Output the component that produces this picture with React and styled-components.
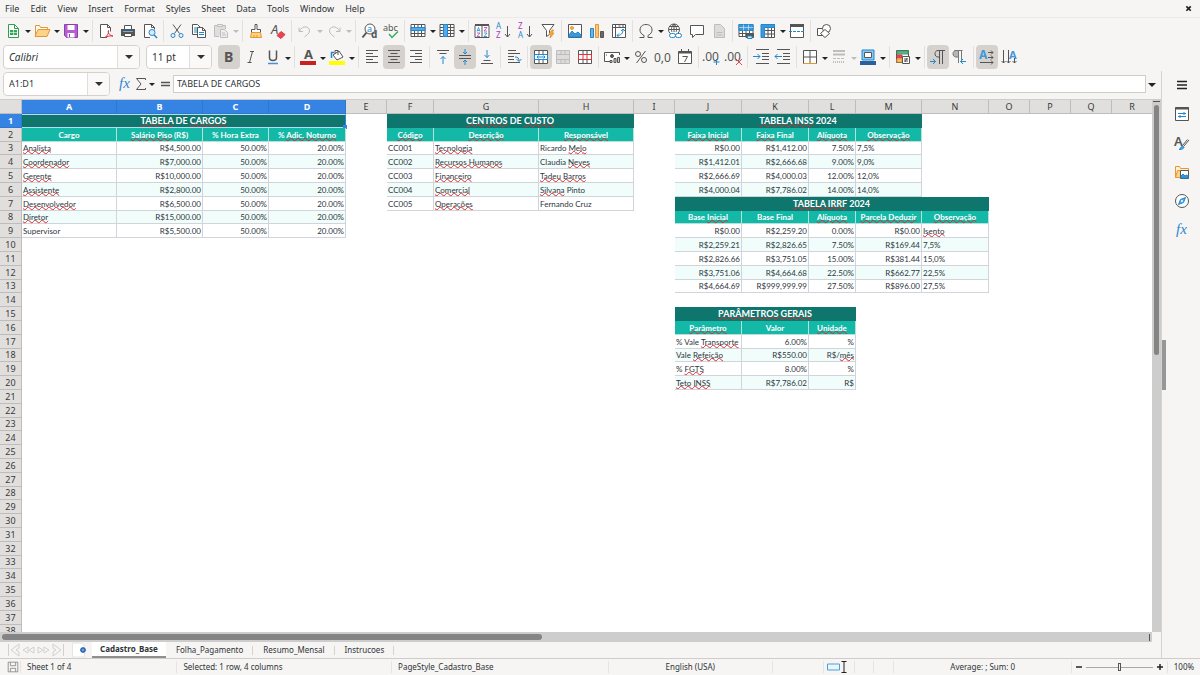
import React from "react";
import styled, { createGlobalStyle, css } from "styled-components";

const GlobalStyle = createGlobalStyle`
  * {
    box-sizing: border-box;
  }
  body {
    margin: 0;
    background: #f6f5f4;
    color: #2e3436;
    font-family: "Noto Sans", sans-serif;
    font-size: 9px;
    line-height: 12px;
    overflow: hidden;
  }
  button,
  input,
  select {
    margin: 0;
    padding: 0;
    border: 0;
    background: none;
    color: inherit;
    font: inherit;
  }
`;

const INK = "#555";
const BLUE = "#1e88d0";
const PALE = "#bdbdbd";

const Window = styled.div`
  display: flex;
  flex-direction: column;
  height: 100vh;
`;

/* ---------- menu bar ---------- */

const MenuBar = styled.nav`
  display: flex;
  align-items: center;
  height: 17px;
  padding: 0 4px 0 5px;
`;

const MenuItem = styled.button`
  margin-right: 11px;
`;

const CloseButton = styled.button`
  display: flex;
  margin-left: auto;
`;

/* ---------- toolbars ---------- */

const Toolbar = styled.div`
  display: flex;
  align-items: center;
  flex: none;
  height: ${(p) => (p.$tall ? 28 : 26)}px;
  padding-left: ${(p) => (p.$tall ? 3 : 2)}px;
  ${(p) => p.$ruled && "border-top: 1px solid #ebeae8;"}
`;

const ToolButton = styled.button`
  display: flex;
  align-items: center;
  justify-content: center;
  flex: none;
  width: ${(p) => p.$width || 22}px;
  height: 24px;
  border-radius: 4px;
  background: ${(p) => (p.$on ? "#d5d1cd" : "transparent")};
`;

const ArrowButton = styled.button`
  display: flex;
  align-items: center;
  justify-content: center;
  flex: none;
  width: ${(p) => p.$width || 7}px;
  height: 20px;
  padding-top: 2px;
  color: ${(p) => (p.disabled ? PALE : "#222")};
`;

const Separator = styled.span`
  flex: none;
  width: 1px;
  height: 22px;
  margin: 0 2px 0 ${(p) => (p.$wide ? 3 : 2)}px;
  background: #e3e1df;
`;

const Glyph = styled.svg`
  display: block;
  overflow: visible;
  fill: none;
  stroke: ${(p) => (p.$off ? PALE : INK)};
  text {
    stroke: none;
    font-family: "Noto Sans", sans-serif;
  }
`;

const Combo = styled.div`
  display: grid;
  grid-template-columns: 1fr 22px;
  flex: none;
  width: ${(p) => p.$width}px;
  height: 24px;
  margin-right: 6px;
  border: 1px solid #d5d1cd;
  border-radius: 4px;
  background: #fff;
  overflow: hidden;
`;

const comboText = css`
  min-width: 0;
  height: 22px;
  padding-left: 5px;
  font-size: 10px;
  font-style: ${(p) => (p.$italic ? "italic" : "normal")};
  outline: 0;
`;

const ComboSelect = styled.select`
  ${comboText}
  grid-area: 1 / 1 / 2 / 3;
  appearance: none;
`;

const ComboInput = styled.input`
  ${comboText}
  font-size: 9px;
`;

const ComboArrow = styled.span`
  display: flex;
  grid-area: 1 / 2;
  align-items: center;
  justify-content: center;
  border-left: 1px solid #e0dedb;
  background: #faf9f8;
  pointer-events: none;
`;

/* ---------- workspace ---------- */

const Workspace = styled.div`
  display: flex;
  flex: 1;
  min-height: 0;
`;

const Main = styled.main`
  display: flex;
  flex-direction: column;
  flex: 1;
  min-width: 0;
`;

const FormulaBar = styled.div`
  display: flex;
  align-items: center;
  flex: none;
  height: 29px;
  padding: 0 3px 3px;
  border-bottom: 1px solid #cfcdca;
`;

const FormulaInput = styled.input`
  flex: 1;
  min-width: 0;
  height: 18px;
  padding-left: 3px;
  border: 1px solid #cfcdca;
  background: #fff;
`;

const SheetRow = styled.div`
  display: flex;
  flex: 1;
  min-height: 0;
`;

const SheetView = styled.div`
  flex: 1;
  min-width: 0;
  background: #fff;
  overflow: hidden;
`;

const VerticalScroll = styled.div`
  display: flex;
  flex-direction: column;
  align-items: center;
  gap: 3px;
  width: 9px;
  padding-top: 1px;
  background: #cdcdcd;
`;

const HorizontalScroll = styled.div`
  display: flex;
  align-items: center;
  justify-content: space-between;
  flex: none;
  height: 10px;
  margin-right: 9px;
  padding: 0 2px;
  background: #cdcdcd;
`;

const Thumb = styled.div`
  border-radius: 3px;
  background: #848484;
  ${(p) => (p.$vertical ? "width: 5px; height: 47%;" : "width: 47%; height: 6px;")}
`;

const SplitMark = styled.span`
  background: #555;
  ${(p) => (p.$vertical ? "width: 7px; height: 1px;" : "width: 1px; height: 7px;")}
`;

/* ---------- sheet ---------- */

const Grid = styled.table`
  width: 0;
  table-layout: fixed;
  border-collapse: separate;
  border-spacing: 0;
  line-height: 12px;
  tr {
    height: 14px;
  }
  tbody tr:nth-child(5n + 3) {
    height: 13px;
  }
`;

const HeadCell = styled.th`
  padding: 0;
  border-right: 1px solid #bfbdbb;
  border-bottom: 1px solid #bfbdbb;
  background: ${(p) => (p.$on ? "#3584e4" : "#e1dfdd")};
  color: ${(p) => (p.$on ? "#fff" : "#3a3a3a")};
  font-weight: ${(p) => (p.$on ? 700 : 400)};
  ${(p) => p.$on && "border-color: #2f77cf;"}
`;

const fills = {
  title: css`
    background: #0f766e;
    border-color: #0f766e;
    color: #fff;
    font-weight: 700;
    text-align: center;
  `,
  head: css`
    background: #14b8a6;
    border-color: #b9dfda;
    color: #fff;
    font-weight: 700;
    text-align: center;
  `,
  even: css`
    background: #f0fdfa;
    border-color: #d1d5db;
  `,
  odd: css`
    border-color: #d1d5db;
  `,
};

const Cell = styled.td`
  position: relative;
  padding: 0 1px;
  border: 0 solid transparent;
  border-width: 0 1px 1px 0;
  color: #2f3640;
  font-family: Lato, sans-serif;
  font-size: ${(p) => (p.$kind === "title" ? 9 : 8)}px;
  line-height: 12px;
  text-align: ${(p) => (p.$right ? "right" : "left")};
  white-space: nowrap;
  ${(p) => fills[p.$kind]}
`;

const Misspelt = styled.span`
  text-decoration: underline wavy #e0262b 1px;
  text-decoration-skip-ink: none;
  text-underline-offset: -1px;
`;

const Selection = styled.span`
  position: absolute;
  inset: 0 -1px -1px 0;
  border: 1px solid #b5dcef;
  border-width: 1px 1px 1px 0;
  border-right-color: #3584e4;
  &::after {
    content: "";
    position: absolute;
    right: -2px;
    bottom: -2px;
    width: 4px;
    height: 4px;
    background: #3584e4;
  }
`;

/* ---------- sheet tabs ---------- */

const TabBar = styled.div`
  display: flex;
  align-items: stretch;
  flex: none;
  height: 16px;
  padding-left: 6px;
  font-size: 8px;
`;

const TabTool = styled.button`
  display: flex;
  align-items: center;
  justify-content: center;
  width: ${(p) => p.$width}px;
`;

const TabGap = styled.span`
  width: 10px;
`;

const Tab = styled.button`
  display: flex;
  align-items: center;
  padding: 0 ${(p) => (p.$on ? 8 : 10)}px;
  ${(p) =>
    p.$on
      ? css`
          background: #fff;
          border-bottom: 2px solid #8f8f8f;
          font-weight: 700;
        `
      : css`
          background: linear-gradient(#d5d3d0, #d5d3d0) right center / 1px 9px no-repeat;
        `}
`;

/* ---------- sidebar ---------- */

const Sidebar = styled.aside`
  display: flex;
  flex: none;
  width: 39px;
  border-left: 1px solid #d5d3d0;
`;

const SidebarHandle = styled.button`
  align-self: center;
  width: 4px;
  height: 50px;
  background: #979797;
`;

const SidebarDeck = styled.div`
  display: flex;
  flex-direction: column;
  align-items: center;
  flex: 1;
  gap: 5px;
  padding: 2px 2px 0 0;
`;

/* ---------- status bar ---------- */

const StatusBar = styled.footer`
  display: flex;
  align-items: center;
  flex: none;
  height: 17px;
  border-top: 1px solid #cfcdca;
  font-size: 8px;
`;

const StatusField = styled.div`
  display: flex;
  align-items: center;
  justify-content: ${(p) => (p.$center ? "center" : "flex-start")};
  flex: ${(p) => (p.$fixed ? "none" : `${p.$width} 1 0`)};
  width: ${(p) => p.$width}px;
  height: 12px;
  padding-left: ${(p) => (p.$center ? 0 : 6)}px;
  border-right: 1px solid #e6e4e2;
  white-space: nowrap;
  &:last-child {
    border-right: 0;
  }
`;

const ZoomSlider = styled.input`
  width: 67px;
  height: 12px;
  margin: 0 1px;
  appearance: none;
  background: linear-gradient(#a9a7a4, #a9a7a4) center / 100% 1px no-repeat;
  &::-webkit-slider-thumb {
    appearance: none;
    width: 3px;
    height: 8px;
    border: 1px solid #555;
    background: #f6f5f4;
  }
`;

const ZoomButton = styled.button`
  display: flex;
`;

/* ---------- icons ---------- */

const gridLines = "M1 1.5h14v12H1zM1 4.5h14M1 7.5h14M1 10.5h14M4.5 1.5v12M8 1.5v12M11.5 1.5v12";

const icons = {
  new: (
    <>
      <path d="M3.5 1.5h6l4 4v9h-10z" fill="#fff" stroke="#2f9e4f" />
      <path d="M9.5 1.5v4h4" stroke="#2f9e4f" />
      <path d="M5 7h7v5H5z" fill="#36a853" stroke="none" />
      <path d="M5 9.500h7M8.500 7v5" stroke="#fff" strokeWidth=".6" />
    </>
  ),
  open: (
    <>
      <path d="M1.5 13V2.5h4l1 2h7v3" fill="#fff" stroke="#e8962e" />
      <path d="M1 13.5L4 6.5h12l-3 7z" fill="#fbd38b" stroke="#e8962e" />
    </>
  ),
  save: (
    <>
      <path d="M1.5 1.5h13v13H3.5l-2-2z" fill="#b45fd0" stroke="#8e3fae" />
      <path d="M4.5 2h7v5h-7z" fill="#fff" stroke="none" />
      <path d="M4.5 10h7v4.5h-7z" fill="#fff" stroke="none" />
      <path d="M6.5 11v3" stroke="#8e3fae" />
    </>
  ),
  pdf: (
    <>
      <path d="M9 14.500H2.500v-13h7l3 3v4" fill="#fff" />
      <path d="M9.500 1.500v3h3" />
      <path d="M7 14.500c3-2 4-5 3.500-7-1 2 1 5 4.500 5.500-3-.5-6 .5-8 1.500z" stroke="#d9363e" />
    </>
  ),
  print: (
    <>
      <path d="M1 6h14v7H1z" fill="#555" stroke="none" />
      <path d="M4.500 6V2.500h7V6M4.500 10.500h7v3h-7z" fill="#fff" />
      <path d="M3 8.500h10" stroke="#5fb0e8" />
    </>
  ),
  preview: (
    <>
      <path d="M8 14.500H2.500v-13h7l3 3v2" fill="#fff" />
      <path d="M9.500 1.500v3h3" />
      <circle cx="10" cy="9.500" r="3" fill="#d7ecfa" stroke={BLUE} />
      <path d="M12.200 12l2.800 3" stroke={BLUE} strokeWidth="1.500" />
    </>
  ),
  cut: (
    <>
      <path d="M4 1.500l6.500 9M12 1.500l-6.500 9" />
      <circle cx="4" cy="12.500" r="2" stroke={BLUE} />
      <circle cx="12" cy="12.500" r="2" stroke={BLUE} />
    </>
  ),
  copy: (
    <>
      <path d="M1.500 1.500h5l3 3v7h-8z" fill="#fff" />
      <path d="M3 5h4M3 7h4M3 9h4" stroke={BLUE} />
      <path d="M6.500 4.500h5l3 3v7h-8z" fill="#fff" />
      <path d="M11.500 4.500v3h3" />
      <path d="M8 9.500h5M8 11.500h5" stroke={BLUE} />
    </>
  ),
  paste: (
    <>
      <path d="M6 13.500H1.500v-11h11V6" fill="#dedede" />
      <path d="M4.500 1.500h5v2h-5z" fill="#eee" />
      <path d="M7.500 6.500h4l3 3v5h-7z" fill="#eee" />
      <path d="M9 10h3M9 12h4" />
    </>
  ),
  brush: (
    <>
      <path d="M7 1.500h2v5h3.500v3h-9v-3H7z" fill="#fff" />
      <path d="M3.500 9.500h9l1 5h-11z" fill="#fbd38b" stroke="#e8962e" />
      <path d="M6 12v2M9 12v2" stroke="#e8962e" />
    </>
  ),
  clear: (
    <>
      <text x="1" y="11" fontSize="13" fontStyle="italic" fill={INK}>A</text>
      <path d="M7 12.500l4-4 4 3-4 4z" fill="#e8474f" stroke="#d9363e" />
    </>
  ),
  undo: <path d="M2 4.500v4h4M2.500 8c3-6 10-5 10 0 0 3-3 4-5 6" />,
  redo: <path d="M14 4.500v4h-4M13.500 8c-3-6-10-5-10 0 0 3 3 4 5 6" />,
  find: (
    <>
      <circle cx="9" cy="6" r="5" fill="#fff" />
      <path d="M5.500 9.500l-4 5" strokeWidth="2" />
      <text x="6" y="9" fontSize="9" fill={BLUE}>a</text>
      <text x="10" y="15" fontSize="10" fontWeight="700" fill={INK}>d</text>
    </>
  ),
  spell: (
    <>
      <text x="0" y="8" fontSize="9" fill={INK}>abc</text>
      <path d="M6 11l3 3.500 6-6" stroke="#36b05a" strokeWidth="1.500" />
    </>
  ),
  rows: (
    <>
      <path d={gridLines} fill="#fff" />
      <path d="M1 4.500h14v3H1z" fill="#53aae8" stroke={BLUE} />
    </>
  ),
  cols: (
    <>
      <path d={gridLines} fill="#fff" />
      <path d="M4.500 1.500h4v12h-4z" fill="#53aae8" stroke={BLUE} />
    </>
  ),
  sort: (
    <>
      <path d="M1 2.500h14v12H1zM8 2.500v12" fill="#fff" />
      <path d="M1 2h14" strokeWidth="2" />
      <path d="M3 8.500l1.500-4 1.500 4M3.500 7.500h2M10 10h3l-3 3.500h3" stroke={BLUE} strokeWidth=".8" />
      <path d="M3 10h3l-3 3.500h3M10 4.500h3L10 8h3" stroke="#a640b5" strokeWidth=".8" />
    </>
  ),
  asc: (
    <>
      <text x="0" y="6" fontSize="8" fill={BLUE}>A</text>
      <text x="0" y="15" fontSize="8" fill="#a640b5">Z</text>
      <path d="M11.500 3v11M9 11l2.500 3 2.500-3" />
    </>
  ),
  desc: (
    <>
      <text x="0" y="6" fontSize="8" fill="#a640b5">Z</text>
      <text x="0" y="15" fontSize="8" fill={BLUE}>A</text>
      <path d="M11.500 3v11M9 11l2.500 3 2.500-3" />
    </>
  ),
  filter: (
    <>
      <path d="M2 1.500h12L9.500 7.500v4l-3 2v-6z" fill="#fff" />
      <path d="M12 7l-3 4h2l-1 4 4-5h-2l1.500-3z" fill="#f7a941" stroke="#e8962e" />
    </>
  ),
  image: (
    <>
      <path d="M1.500 1.500h13v13h-13z" fill="#fff" />
      <path d="M2 14v-2l3-4 3 3 3-2 3 3v2z" fill="#3d97dc" stroke={BLUE} />
      <circle cx="5" cy="5" r="1.500" fill="#f7b85a" stroke="#e8962e" />
    </>
  ),
  chart: (
    <>
      <path d="M1.500 5.500h3v9h-3z" fill="#6bb5ec" stroke={BLUE} />
      <path d="M6.500 1.500h3v13h-3z" fill="#fbc774" stroke="#e8962e" />
      <path d="M11.500 8.500h3v6h-3z" fill="#6a6a6a" />
    </>
  ),
  pivot: (
    <>
      <path d="M1.500 1.500h13v13h-13zM1.500 4.500h13M4.500 1.500v13M7.500 3h2M11 3h2" fill="#fff" />
      <path d="M6 12.500c4 0 6-2 6-6M10 8l2-2 2 2M8 10.500l-2 2 2 2" stroke={BLUE} />
    </>
  ),
  omega: <path d="M1.500 14.500H6v-2C3 11 2 9 2 7c0-3 2-5.500 6-5.500S14 4 14 7c0 2-1 4-4 5.500v2h4.500" />,
  link: (
    <>
      <circle cx="7" cy="6.500" r="5.500" fill="#fff" />
      <path d="M1.500 6.500h11M2.500 3.500h9M7 1v8M7 1c-3 3-3 6-2 8M7 1c3 3 3 6 2 8" />
      <rect x="2.500" y="10.500" width="6" height="4" rx="2" fill="#fff" stroke={BLUE} />
      <rect x="8.500" y="10.500" width="6" height="4" rx="2" fill="#fff" stroke={BLUE} />
    </>
  ),
  comment: <path d="M1.500 2.500h13v9H6.500l-3 3v-3h-2z" fill="#fff" />,
  headerFooter: (
    <>
      <path d="M3.500 1.500h6l4 4v9h-10z" fill="#dcdcdc" />
      <path d="M5.500 9.500h6M5.500 12h6" />
    </>
  ),
  printArea: (
    <>
      <path d={gridLines} fill="#fff" />
      <path d="M1 1.500h14v6H1z" fill="#3d97dc" stroke={BLUE} />
      <path d="M5.500 1.500v6M10.500 1.500v6M1 4.500h14" stroke="#fff" strokeWidth=".5" />
      <path d="M8 10.500h7.500v4H8z" fill="#555" />
      <path d="M9.500 13h4.500v2.500H9.500z" fill="#cfe8fa" stroke={BLUE} />
    </>
  ),
  freeze: (
    <>
      <path d="M1.500 1.500h13v13h-13zM4.500 7.500h10M4.500 11h10M8 4.500v10M11.500 4.500v10" fill="#fff" />
      <path d="M1 1.500h13.500v3h-10v10H1z" fill="#3d97dc" stroke={BLUE} />
    </>
  ),
  split: (
    <>
      <path d="M1.500 1.500h13v13h-13z" fill="#fff" />
      <path d="M1 2.500h14" strokeWidth="3" />
      <path d="M0 8.500h16" stroke={BLUE} strokeDasharray="3 1" />
    </>
  ),
  shapes: (
    <>
      <path d="M1.500 5.500h7v7h-7z" fill="#fff" />
      <circle cx="10.500" cy="5.500" r="4" fill="#fff" />
      <path d="M9 6.500l4.500 4-4.500 4-4.500-4z" fill="#fff" />
    </>
  ),
  bold: <text x="3" y="13" fontSize="14" fontWeight="700" fill={INK}>B</text>,
  italic: <path d="M7 2.500h4M4.500 13.500h4M9.500 2.500l-3 11" />,
  underline: (
    <>
      <path d="M4.500 1.500v7c0 4 7 4 7 0v-7" strokeWidth="1.500" />
      <path d="M3 14.500h10" stroke="#4a90d9" strokeWidth="1.500" />
    </>
  ),
  fontColor: (
    <>
      <text x="4" y="10" fontSize="13" fontWeight="700" fill={INK}>A</text>
      <path d="M0 14h16" stroke="#c9211e" strokeWidth="4" />
    </>
  ),
  fillColor: (
    <>
      <path d="M4 6l6-4 4 6-6 3z" fill="#fff" />
      <path d="M6 5V1.500h3V6" />
      <path d="M2.500 9V3.500H5" stroke={BLUE} strokeWidth="1.500" />
      <path d="M0 14h16" stroke="#ff0" strokeWidth="4" />
    </>
  ),
  left: <path d="M2 1.500h12M2 4.500h7M2 7.500h12M2 10.500h7M2 13.500h12" />,
  center: <path d="M2 1.500h12M4.500 4.500h7M2 7.500h12M4.500 10.500h7M2 13.500h12" />,
  right: <path d="M2 1.500h12M7 4.500h7M2 7.500h12M7 10.500h7M2 13.500h12" />,
  top: (
    <>
      <path d="M2 1.500h12M4.500 4.500h7" />
      <path d="M8 15V7.500M5.500 10L8 7.500l2.500 2.500" stroke={BLUE} />
    </>
  ),
  middle: (
    <>
      <path d="M2 6.500h12M2 9.500h12" />
      <path d="M8 0v5M6 3l2 2 2-2M8 16v-5M6 13l2-2 2 2" stroke={BLUE} />
    </>
  ),
  bottom: (
    <>
      <path d="M4.500 11.500h7M2 14.500h12" />
      <path d="M8 1v7.500M5.500 6L8 8.500 10.500 6" stroke={BLUE} />
    </>
  ),
  wrap: (
    <>
      <path d="M2 1.500h8M2 4.500h12M2 7.500h6M2 10.500h6M2 13.500h12" />
      <path d="M9 8c3 0 4 1 4 4M10.500 10l2.500 2.500L15.500 10" stroke={BLUE} />
    </>
  ),
  merge: (
    <>
      <path d="M1.500 1.500h13v13h-13zM1.500 5.500h13M1.500 10.500h13M6 1.500v4M10 1.500v4M6 10.500v4M10 10.500v4" fill="#fff" />
      <path d="M1.500 5.500h13v5h-13zM4 8h8M5.500 6.500L4 8l1.500 1.500M10.500 6.500L12 8l-1.500 1.500" stroke={BLUE} />
    </>
  ),
  mergeOff: (
    <path d="M1.500 1.500h13v13h-13zM1.500 5.500h13M1.500 10.500h13M6 1.500v4M10 1.500v4M6 10.500v4M10 10.500v4" fill="#dcdcdc" />
  ),
  unmerge: (
    <>
      <path d="M1.500 1.500h13v13h-13zM6 1.500v4M10 1.500v4M6 10.500v4M10 10.500v4" fill="#fff" />
      <path d="M1.500 5.500h13v5h-13zM6 5.500v5M10 5.500v5" stroke="#d9363e" />
    </>
  ),
  currency: (
    <>
      <path d="M6 12.500H.5v-9h15V6" fill="#fff" />
      <circle cx="8" cy="7" r="1.500" fill={INK} />
      <path d="M6 11.500h2v2H6zM10 9.500h2v4h-2zM13.500 8.500h2v5h-2z" fill="#ccc" />
      <path d="M2.500 5.500v1" />
    </>
  ),
  percent: (
    <>
      <circle cx="5" cy="5" r="2.500" />
      <circle cx="11" cy="11" r="2.500" />
      <path d="M12.500 2l-9 12" />
    </>
  ),
  number: <text x="-1" y="13" fontSize="12" fill={INK}>0,0</text>,
  date: (
    <>
      <path d="M1.500 2.500h13v12h-13z" fill="#fff" />
      <path d="M1.500 3.500h13" strokeWidth="2" />
      <path d="M4.500 0v4M11.500 0v4M5.500 7.500h5L7.500 13" />
    </>
  ),
  addDecimal: (
    <>
      <text x="-2" y="12" fontSize="12" fill={INK}>.00</text>
      <path d="M12.500 10v6M9.500 13h6" stroke={BLUE} />
    </>
  ),
  delDecimal: (
    <>
      <text x="-2" y="12" fontSize="12" fill={INK}>.00</text>
      <path d="M10 10l6 6M16 10l-6 6" stroke="#e0454c" />
    </>
  ),
  indent: (
    <>
      <path d="M3 .5h13M9 4.500h7M9 7.500h7M9 10.500h7M3 14.500h13" />
      <path d="M0 7.500h7M4.500 5L7 7.500 4.500 10" stroke={BLUE} />
    </>
  ),
  outdent: (
    <>
      <path d="M2 .5h13M8 4.500h7M8 7.500h7M8 10.500h7M2 14.500h13" />
      <path d="M0 7.500h7M2.500 5L0 7.500 2.500 10" stroke={BLUE} />
    </>
  ),
  borders: (
    <>
      <path d="M1.500 1.500h13v13h-13z" fill="#fff" />
      <path d="M8 1.500v13M1.500 8h13" />
      <path d="M1.500 14.500h13" stroke="#e8962e" />
    </>
  ),
  lineStyle: (
    <>
      <path d="M2 2h12M2 5.500h12" strokeWidth="2" />
      <path d="M2 9.500h12" strokeDasharray="3 1" />
      <path d="M2 13h12" strokeDasharray="1 1" strokeWidth="2" />
    </>
  ),
  lineColor: (
    <>
      <path d="M2 1h12v10H2z" fill="#8fc6ee" stroke={BLUE} />
      <path d="M4.500 3.500h7v5h-7z" fill="#fff" />
      <path d="M0 14h16" stroke="#2a6099" strokeWidth="4" />
    </>
  ),
  conditional: (
    <>
      <path d="M1.500 1.500h12v12h-12z" fill="#fff" />
      <path d="M2 2h11v3H2z" fill="#57b98a" stroke="#3a9b6c" />
      <path d="M2 6h5v3H2z" fill="#e8474f" stroke="#d9363e" />
      <path d="M2 10h5v3H2z" fill="#fbc774" stroke="#e8962e" />
      <path d="M7.500 7.500h7v7h-7zM9 10h4M9 12h4M12 9l-2 4" fill="#fff" />
    </>
  ),
  ltr: (
    <>
      <path d="M9.500 15V1.500M12.500 15V1.500M15 1.500H8C4 1.500 4 8 8 8h1.500" />
      <path d="M0 12.500h5.500M3 10l2.500 2.500L3 15" stroke={BLUE} />
    </>
  ),
  rtl: (
    <>
      <path d="M6.500 1.500H4c-4 0-4 6.500 0 6.500h2.500z" fill="#b5b5b5" stroke="#777" />
      <path d="M6.500 14V1.500M9.500 11V1.500M2.500 1.500h8" stroke="#777" />
      <path d="M14 12.500H8.500M11 10l-2.500 2.500L11 15" stroke={BLUE} />
    </>
  ),
  textLtr: (
    <>
      <text x="0" y="10" fontSize="12" fontWeight="700" fill="#3d97dc">A</text>
      <path d="M9 3.500h5M9 8.500h5M1 13.500h13M12 1.500l2 2-2 2M12 6.500l2 2-2 2M12 11.500l2 2-2 2" />
    </>
  ),
  textTtb: (
    <>
      <text x="8" y="10" fontSize="11" fontWeight="700" fill="#3d97dc">A</text>
      <path d="M2.500 1v13M7.500 1v13M13.500 9v5M.5 12l2 2 2-2M5.500 12l2 2 2-2M11.500 12l2 2 2-2" />
    </>
  ),
  fx: (
    <text x="2" y="12" fontSize="15" fontStyle="italic" fill="#2e86d2" style={{ fontFamily: "Liberation Serif" }}>
      fx
    </text>
  ),
  sum: <path d="M12.500 4V2.500h-9L8 8l-4.500 5.500h9V12" />,
  equals: <path d="M4 6.500h9M4 9.500h9" strokeWidth="1.500" />,
  menu: <path d="M3 4.500h10M3 8h10M3 11.500h10" strokeWidth="1.500" stroke="#222" />,
  properties: (
    <>
      <path d="M1.500 1.500h13v13h-13z" fill="#fff" />
      <path d="M1 2.500h14" strokeWidth="2" />
      <path d="M4 7.500h8M4 10.500h8M10 6v3M6 9v3" stroke={BLUE} />
    </>
  ),
  styles: (
    <>
      <text x="0" y="11" fontSize="13" fontWeight="600" fill={INK}>A</text>
      <path d="M15 5l-5 6M13.500 4.500l-5 6" />
      <path d="M5 14.500c2 0 1-3 4-3.500 2 1 1 3.500-4 3.500z" fill="#53aae8" stroke={BLUE} />
    </>
  ),
  gallery: (
    <>
      <path d="M1.500 13.500v-11h4l1 2h8v3" fill="#fff3de" stroke="#e8962e" />
      <path d="M1.500 13.500l2-7h4v7z" fill="#fbd38b" stroke="#e8962e" />
      <path d="M6.500 6.500h8v8h-8z" fill="#fff" />
      <path d="M7 14v-2l2-2 2 2 1.500-1L14 12v2z" fill="#3d97dc" stroke={BLUE} />
    </>
  ),
  navigator: (
    <>
      <circle cx="8" cy="8" r="6.500" fill="#fff" />
      <path d="M11.500 4.500l-2 5-5 2 2-5z" fill="#53aae8" stroke={BLUE} />
      <circle cx="8" cy="8" r="1" fill="#fff" stroke="none" />
    </>
  ),
  saveSmall: <path d="M2.500 2.500h11v11h-11zM5 2.500v4h6v-4M5 13.500v-4h6v4" stroke="#8a8a8a" />,
  addSheet: (
    <>
      <path d="M-3.500 1h9l3 3v11h-12z" fill="#fff" stroke="#e4e4e4" />
      <circle cx="7" cy="8" r="2" fill="#fff" stroke="#2a68b8" strokeWidth="1.500" />
      <path d="M7 5v6M4 8h6" stroke="#2a68b8" strokeWidth=".8" />
    </>
  ),
  first: <path d="M3.500 2v12M14 2L6 8l8 6V10L11 8l3-2z" stroke="#d2d0ce" />,
  prev: <path d="M8 5L3 8l5 3zM14 5L9 8l5 3z" stroke="#d2d0ce" />,
  next: <path d="M2 5l5 3-5 3zM8 5l5 3-5 3z" stroke="#d2d0ce" />,
  last: <path d="M12.500 2v12M2 2l8 6-8 6V10l3-2-3-2z" stroke="#d2d0ce" />,
  selectMode: (
    <>
      <path d="M-3.500 5h12v6h-12z" stroke="#4a9fdd" fill="#eaf5fd" />
      <path d="M10.500 2.500h5M10.500 13.500h5M13 2.500v11" stroke="#222" />
    </>
  ),
  minus: <path d="M4 8h8" stroke="#222" strokeWidth="2" />,
  plus: <path d="M4 8h8M8 4v8" stroke="#222" strokeWidth="2" />,
  close: <path d="M5 5l5 5M10 5l-5 5" stroke="#222" strokeWidth="2" />,
};

const Icon = ({ name, size = 16, off }) => (
  <Glyph width={size} height={size} viewBox="0 0 16 16" $off={off} aria-hidden="true">
    {icons[name]}
  </Glyph>
);

const Caret = ({ big }) => (
  <svg width={big ? 8 : 6} height={big ? 4 : 3} viewBox="0 0 8 4" aria-hidden="true">
    <path d="M0 0h8L4 4z" fill="currentColor" />
  </svg>
);

/* [icon, label, flags]: a = has arrow, x = disabled, o = pressed; "|" separates groups */
const standardTools = [
  ["new", "New", "a"], ["open", "Open", "a"], ["save", "Save", "a"], "|",
  ["pdf", "Export as PDF"], ["print", "Print"], ["preview", "Print preview"], "|",
  ["cut", "Cut"], ["copy", "Copy"], ["paste", "Paste", "ax"], "|",
  ["brush", "Clone formatting"], ["clear", "Clear formatting"], "|",
  ["undo", "Undo", "ax"], ["redo", "Redo", "ax"], "|",
  ["find", "Find and replace"], ["spell", "Spelling"], "|",
  ["rows", "Row", "a"], ["cols", "Column", "a"], "|",
  ["sort", "Sort"], ["asc", "Sort ascending"], ["desc", "Sort descending"], ["filter", "AutoFilter"], "|",
  ["image", "Image"], ["chart", "Chart"], ["pivot", "Pivot table"], "|",
  ["omega", "Special character", "a"], ["link", "Hyperlink"], ["comment", "Comment"],
  ["headerFooter", "Headers and footers", "x"], "|",
  ["printArea", "Print area"], ["freeze", "Freeze rows and columns", "a"], ["split", "Split window"], "|",
  ["shapes", "Draw functions"],
];

const formatTools = [
  ["bold", "Bold", "o"], ["italic", "Italic"], ["underline", "Underline", "a"], "|",
  ["fontColor", "Font color", "a"], ["fillColor", "Background color", "a"], "|",
  ["left", "Align left"], ["center", "Center", "o"], ["right", "Align right"], "|",
  ["top", "Align top"], ["middle", "Center vertically", "o"], ["bottom", "Align bottom"], "|",
  ["wrap", "Wrap text"], "|",
  ["merge", "Merge and center", "o"], ["mergeOff", "Merge cells", "x"], ["unmerge", "Unmerge cells"], "|",
  ["currency", "Currency", "a"], ["percent", "Percent"], ["number", "Number"], ["date", "Date"], "|",
  ["addDecimal", "Add decimal place"], ["delDecimal", "Delete decimal place"], "|",
  ["indent", "Increase indent"], ["outdent", "Decrease indent"], "|",
  ["borders", "Borders", "a"], ["lineStyle", "Border style", "ax"], ["lineColor", "Border color", "a"], "|",
  ["conditional", "Conditional", "a"], "|",
  ["ltr", "Left to right", "o"], ["rtl", "Right to left"], "|",
  ["textLtr", "Text left to right", "o"], ["textTtb", "Text top to bottom"],
];

const Tools = ({ items }) =>
  items.map((item, i) => {
    if (item === "|") {
      const prev = items[i - 1][2] || "";
      return <Separator key={i} $wide={prev.includes("a")} />;
    }
    const [name, label, flags = ""] = item;
    const off = flags.includes("x");
    return (
      <React.Fragment key={name}>
        <ToolButton aria-label={label} disabled={off} $on={flags.includes("o")}>
          <Icon name={name} off={off} />
        </ToolButton>
        {flags.includes("a") && (
          <ArrowButton aria-label={`${label} options`} disabled={off}>
            <Caret />
          </ArrowButton>
        )}
      </React.Fragment>
    );
  });

/* ---------- sheet data ---------- */

const ROW_HEIGHT = 14;
const COL_WIDTH = 41;
const usedColumns = [95, 86, 66, 77, 41, 47, 105, 95, 41, 67, 67, 47, 66, 67];

const colName = (i) => (i < 26 ? "" : colName(Math.floor(i / 26) - 1)) + String.fromCharCode(65 + (i % 26));

// words between underscores are flagged by the spell checker
const tables = [
  {
    row: 1,
    col: 0,
    title: "_TABELA_ DE _CARGOS_",
    heads: ["Cargo", "_Salário Piso_ (R$)", "% Hora Extra", "% _Adic. Noturno_"],
    align: "lrrr",
    rows: [
      ["_Analista_", "R$4,500.00", "50.00%", "20.00%"],
      ["_Coordenador_", "R$7,000.00", "50.00%", "20.00%"],
      ["_Gerente_", "R$10,000.00", "50.00%", "20.00%"],
      ["_Assistente_", "R$2,800.00", "50.00%", "20.00%"],
      ["_Desenvolvedor_", "R$6,500.00", "50.00%", "20.00%"],
      ["_Diretor_", "R$15,000.00", "50.00%", "20.00%"],
      ["Supervisor", "R$5,500.00", "50.00%", "20.00%"],
    ],
  },
  {
    row: 1,
    col: 5,
    title: "_CENTROS_ DE _CUSTO_",
    heads: ["_Código_", "_Descrição_", "_Responsável_"],
    align: "lll",
    rows: [
      ["CC001", "_Tecnologia_", "Ricardo _Melo_"],
      ["CC002", "_Recursos Humanos_", "Claudia _Neves_"],
      ["CC003", "_Financeiro_", "_Tadeu Barros_"],
      ["CC004", "_Comercial_", "_Silvana_ Pinto"],
      ["CC005", "_Operações_", "Fernando Cruz"],
    ],
  },
  {
    row: 1,
    col: 9,
    title: "_TABELA INSS_ 2024",
    heads: ["_Faixa Inicial_", "_Faixa_ Final", "_Alíquota_", "_Observação_"],
    align: "rrrl",
    rows: [
      ["R$0.00", "R$1,412.00", "7.50%", "7,5%"],
      ["R$1,412.01", "R$2,666.68", "9.00%", "9,0%"],
      ["R$2,666.69", "R$4,000.03", "12.00%", "12,0%"],
      ["R$4,000.04", "R$7,786.02", "14.00%", "14,0%"],
    ],
  },
  {
    row: 7,
    col: 9,
    title: "_TABELA IRRF_ 2024",
    heads: ["Base _Inicial_", "Base Final", "_Alíquota_", "_Parcela Deduzir_", "_Observação_"],
    align: "rrrrl",
    rows: [
      ["R$0.00", "R$2,259.20", "0.00%", "R$0.00", "_Isento_"],
      ["R$2,259.21", "R$2,826.65", "7.50%", "R$169.44", "7,5%"],
      ["R$2,826.66", "R$3,751.05", "15.00%", "R$381.44", "15,0%"],
      ["R$3,751.06", "R$4,664.68", "22.50%", "R$662.77", "22,5%"],
      ["R$4,664.69", "R$999,999.99", "27.50%", "R$896.00", "27,5%"],
    ],
  },
  {
    row: 15,
    col: 9,
    title: "_PARÂMETROS GERAIS_",
    heads: ["_Parâmetro_", "Valor", "_Unidade_"],
    align: "lrr",
    rows: [
      ["% Vale _Transporte_", "6.00%", "%"],
      ["Vale _Refeição_", "R$550.00", "R$/_mês_"],
      ["% _FGTS_", "8.00%", "%"],
      ["_Teto INSS_", "R$7,786.02", "R$"],
    ],
  },
];

const cellAt = {};
tables.forEach((t) => {
  cellAt[`${t.row}:${t.col}`] = { text: t.title, kind: "title", span: t.heads.length };
  t.heads.forEach((text, c) => {
    cellAt[`${t.row + 1}:${t.col + c}`] = { text, kind: "head" };
  });
  t.rows.forEach((values, r) =>
    values.forEach((text, c) => {
      cellAt[`${t.row + 2 + r}:${t.col + c}`] = {
        text,
        kind: r % 2 ? "even" : "odd",
        right: t.align[c] === "r",
      };
    })
  );
});

const CellText = ({ text }) =>
  text.split("_").map((part, i) => (i % 2 ? <Misspelt key={i}>{part}</Misspelt> : part));

const SheetLine = ({ row, count }) => {
  const cells = [];
  for (let c = 0; c < count; ) {
    const cell = cellAt[`${row}:${c}`] || { text: "" };
    cells.push(
      <Cell key={c} colSpan={cell.span} $kind={cell.kind} $right={cell.right}>
        <CellText text={cell.text} />
        {row === 1 && c === 0 && <Selection />}
      </Cell>
    );
    c += cell.span || 1;
  }
  return (
    <tr>
      <HeadCell scope="row" $on={row === 1}>{row}</HeadCell>
      {cells}
    </tr>
  );
};

// only as many rows and columns as the window has room for
const visibleRange = () => {
  const used = usedColumns.reduce((a, b) => a + b, 0);
  return {
    rows: Math.max(20, Math.ceil((window.innerHeight - 156) / ROW_HEIGHT)),
    extra: Math.max(0, Math.ceil((window.innerWidth - 71 - used) / COL_WIDTH)),
  };
};

const Spreadsheet = () => {
  const [range, setRange] = React.useState(visibleRange);

  React.useEffect(() => {
    const onResize = () => setRange(visibleRange());
    window.addEventListener("resize", onResize);
    return () => window.removeEventListener("resize", onResize);
  }, []);

  const columns = [...usedColumns, ...Array(range.extra).fill(COL_WIDTH)];

  return (
    <Grid>
      <colgroup>
        <col style={{ width: 22 }} />
        {columns.map((width, i) => (
          <col key={i} style={{ width }} />
        ))}
      </colgroup>
      <thead>
        <tr>
          <HeadCell aria-label="Select all" />
          {columns.map((_, i) => (
            <HeadCell key={i} scope="col" $on={i < 4}>{colName(i)}</HeadCell>
          ))}
        </tr>
      </thead>
      <tbody>
        {Array.from({ length: range.rows }, (_, i) => (
          <SheetLine key={i} row={i + 1} count={columns.length} />
        ))}
      </tbody>
    </Grid>
  );
};

const menus = ["File", "Edit", "View", "Insert", "Format", "Styles", "Sheet", "Data", "Tools", "Window", "Help"];
const sheets = ["Cadastro_Base", "Folha_Pagamento", "Resumo_Mensal", "Instrucoes"];
const decks = ["menu", "properties", "styles", "gallery", "navigator", "fx"];

export default function App() {
  const [sheet, setSheet] = React.useState(sheets[0]);
  const [zoom, setZoom] = React.useState(100);

  return (
    <Window>
      <GlobalStyle />
      <MenuBar>
        {menus.map((m) => (
          <MenuItem key={m}>{m}</MenuItem>
        ))}
        <CloseButton aria-label="Close document">
          <Icon name="close" size={14} />
        </CloseButton>
      </MenuBar>

      <Toolbar $ruled>
        <Tools items={standardTools} />
      </Toolbar>

      <Toolbar $tall>
        <Combo $width={137}>
          <ComboSelect aria-label="Font name" $italic defaultValue="Calibri">
            <option>Calibri</option>
          </ComboSelect>
          <ComboArrow><Caret big /></ComboArrow>
        </Combo>
        <Combo $width={66}>
          <ComboSelect aria-label="Font size" defaultValue="11 pt">
            <option>11 pt</option>
          </ComboSelect>
          <ComboArrow><Caret big /></ComboArrow>
        </Combo>
        <Tools items={formatTools} />
      </Toolbar>

      <Workspace>
        <Main>
          <FormulaBar>
            <Combo $width={107}>
              <ComboInput aria-label="Name box" defaultValue="A1:D1" />
              <ComboArrow><Caret big /></ComboArrow>
            </Combo>
            <ToolButton aria-label="Function wizard" $width={18}>
              <Icon name="fx" />
            </ToolButton>
            <ToolButton aria-label="Sum" $width={13}>
              <Icon name="sum" />
            </ToolButton>
            <ArrowButton aria-label="Sum options" $width={10}>
              <Caret />
            </ArrowButton>
            <ToolButton aria-label="Formula" $width={16}>
              <Icon name="equals" />
            </ToolButton>
            <FormulaInput aria-label="Input line" defaultValue="TABELA DE CARGOS" />
            <ArrowButton aria-label="Expand formula bar" $width={12}>
              <Caret big />
            </ArrowButton>
          </FormulaBar>

          <SheetRow>
            <SheetView>
              <Spreadsheet />
            </SheetView>
            <VerticalScroll>
              <SplitMark $vertical />
              <Thumb $vertical />
            </VerticalScroll>
          </SheetRow>
          <HorizontalScroll>
            <Thumb />
            <SplitMark />
          </HorizontalScroll>

          <TabBar>
            <TabTool aria-label="First sheet" $width={14}><Icon name="first" /></TabTool>
            <TabTool aria-label="Previous sheet" $width={16}><Icon name="prev" /></TabTool>
            <TabTool aria-label="Next sheet" $width={16}><Icon name="next" /></TabTool>
            <TabTool aria-label="Last sheet" $width={14}><Icon name="last" /></TabTool>
            <TabGap />
            <TabTool aria-label="Add sheet" $width={16}><Icon name="addSheet" /></TabTool>
            {sheets.map((s) => (
              <Tab key={s} $on={s === sheet} onClick={() => setSheet(s)}>{s}</Tab>
            ))}
          </TabBar>
        </Main>

        <Sidebar>
          <SidebarHandle aria-label="Hide sidebar" />
          <SidebarDeck>
            {decks.map((d) => (
              <ToolButton key={d} aria-label={d}>
                <Icon name={d} />
              </ToolButton>
            ))}
          </SidebarDeck>
        </Sidebar>
      </Workspace>

      <StatusBar>
        <StatusField $width={21} $fixed>
          <Icon name="saveSmall" size={14} />
        </StatusField>
        <StatusField $width={154}>Sheet 1 of 4</StatusField>
        <StatusField $width={214}>Selected: 1 row, 4 columns</StatusField>
        <StatusField $width={216}>PageStyle_Cadastro_Base</StatusField>
        <StatusField $width={168} $center>English (USA)</StatusField>
        <StatusField $width={46} />
        <StatusField $width={31} $fixed $center><Icon name="selectMode" /></StatusField>
        <StatusField $width={19} $fixed />
        <StatusField $width={20} $fixed />
        <StatusField $width={182} $center>Average: ; Sum: 0</StatusField>
        <StatusField $width={96} $fixed $center>
          <ZoomButton aria-label="Zoom out"><Icon name="minus" size={12} /></ZoomButton>
          <ZoomSlider
            type="range"
            aria-label="Zoom"
            min="0"
            max="200"
            value={zoom}
            onChange={(e) => setZoom(Number(e.target.value))}
          />
          <ZoomButton aria-label="Zoom in"><Icon name="plus" size={12} /></ZoomButton>
        </StatusField>
        <StatusField $width={32} $fixed $center>{zoom}%</StatusField>
      </StatusBar>
    </Window>
  );
}
